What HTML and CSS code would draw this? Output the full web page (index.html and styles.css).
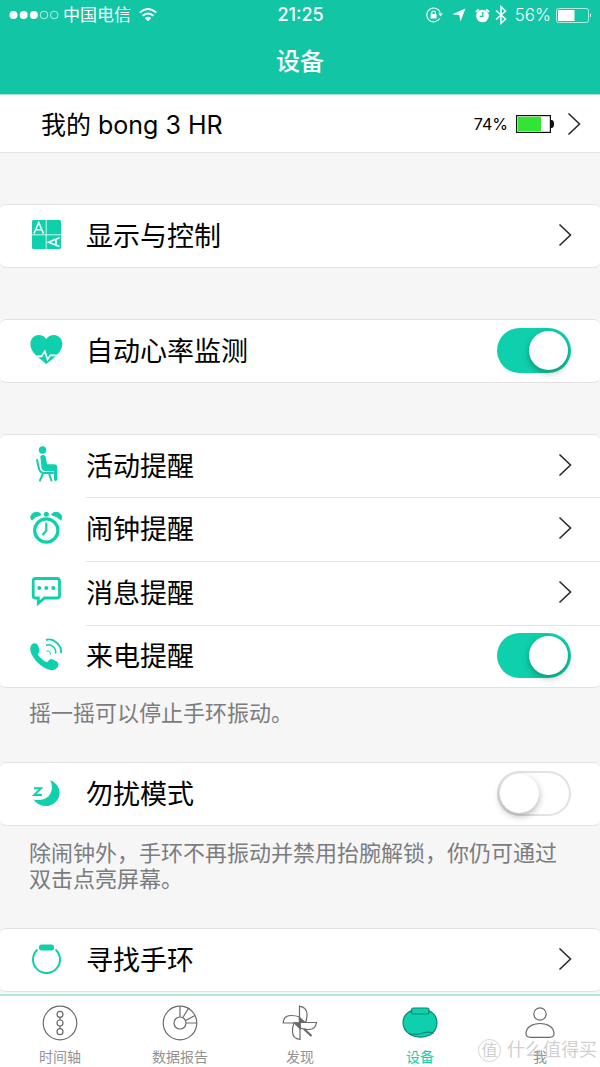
FILE: index.html
```
<!DOCTYPE html>
<html lang="zh-CN">
<head>
    <meta charset="UTF-8">
    <meta name="viewport" content="width=device-width, initial-scale=1.0">
    <title>设备</title>
    <link rel="stylesheet" href="styles.css">
</head>
<body>
    <svg class="defs" width="0" height="0" aria-hidden="true">
        <symbol id="chevron" viewBox="0 0 14 24">
            <path d="M1.500 1.500L12.500 12L1.500 22.500" fill="none" stroke="#2b2b2b" stroke-width="1.600"/>
        </symbol>
    </svg>

    <header class="header">
        <div class="status">
            <div class="status-left">
                <svg class="signal" width="50" height="10" viewBox="0 0 50 10">
                    <g fill="#fff">
                        <circle cx="4.500" cy="5" r="4"/>
                        <circle cx="14.700" cy="5" r="4"/>
                        <circle cx="24.900" cy="5" r="4"/>
                    </g>
                    <g fill="none" stroke="#fff" stroke-width=".7">
                        <circle cx="35" cy="5" r="3.800"/>
                        <circle cx="45.200" cy="5" r="3.800"/>
                    </g>
                </svg>
                <span>中国电信</span>
                <svg class="wifi" width="18" height="14" viewBox="0 0 18 14">
                    <path d="M.8 4.600Q9-2.600 17.200 4.600" fill="none" stroke="#fff" stroke-width="2"/>
                    <path d="M3.600 7.800Q9 3.200 14.400 7.800" fill="none" stroke="#fff" stroke-width="2"/>
                    <path d="M5.800 10Q9 7.400 12.200 10L9 13.200z" fill="#fff"/>
                </svg>
            </div>
            <span class="time">21:25</span>
            <div class="status-right">
                <svg class="lock" width="17" height="16" viewBox="0 0 17 16">
                    <path d="M14.300 6A6.900 6.900 0 1 0 13.600 11.500" fill="none" stroke="#fff" stroke-width="1.100"/>
                    <path d="M12.200 6.600h4.600L14.500 9.600z" fill="#fff"/>
                    <rect x="4.600" y="7" width="6" height="4.600" rx=".5" fill="#fff"/>
                    <path d="M5.800 7.500V5.800a1.800 1.800 0 0 1 3.600 0v1.700" fill="none" stroke="#fff" stroke-width="1.200"/>
                </svg>
                <svg class="arrow" width="14" height="14" viewBox="0 0 14 14">
                    <path d="M13.500.5L8.400 13.500L7.300 7L.3 6.300z" fill="#fff"/>
                </svg>
                <svg class="alarm" width="15" height="15" viewBox="0 0 15 15">
                    <circle cx="7.500" cy="8" r="6.300" fill="#fff"/>
                    <path d="M.8 4L3.700 1.300M14.200 4L11.300 1.300" stroke="#fff" stroke-width="1.700"/>
                    <path d="M7.800 4V8.300H4.600" fill="none" stroke="#12c6a5" stroke-width="1.300"/>
                </svg>
                <svg class="bluetooth" width="12" height="20" viewBox="0 0 12 20">
                    <path d="M1 5.500L10.500 14L6 18.300V1.700L10.500 6L1 14.500" fill="none" stroke="#fff" stroke-width="1.500"/>
                </svg>
                <span>56%</span>
                <svg class="power" width="36" height="15" viewBox="0 0 36 15">
                    <rect x=".5" y=".5" width="32" height="14" rx="2" fill="none" stroke="#fff" stroke-opacity=".65"/>
                    <rect x="2" y="2" width="16.500" height="11" fill="#fff"/>
                    <path d="M34 5.300q2 2.200 0 4.400z" fill="#fff"/>
                </svg>
            </div>
        </div>
        <h1 class="title">设备</h1>
    </header>

    <main class="content">
        <a class="device" href="#">
            <span class="device-name">我的 bong 3 HR</span>
            <span class="device-level">74%</span>
            <svg class="battery" width="38" height="18" viewBox="0 0 38 18">
                <rect x=".6" y=".6" width="33.800" height="16.800" fill="#fff" stroke="#111" stroke-width="1.200"/>
                <rect x="1.800" y="1.800" width="23.200" height="14.400" fill="#33e533"/>
                <path d="M34.500 5h1.500q2 .5 2 4t-2 4h-1.500z" fill="#111"/>
            </svg>
            <svg class="chevron" width="14" height="24"><use href="#chevron"/></svg>
        </a>

        <section class="group">
            <a class="row" href="#">
                <svg class="icon" viewBox="0 0 36 36">
                    <rect x="4" y="3" width="29" height="29" rx="1.500" fill="#0fd0ac"/>
                    <path d="M18.200 3v29M4 17.800h29" stroke="#fff" stroke-width=".8"/>
                    <path d="M6 16.500L10.700 5.500L15.500 16.500M7.500 12.800h6.500" fill="none" stroke="#fff" stroke-width="1.600"/>
                    <path d="M31.500 20.800L20.500 25.200L31.500 29.600M28 22.200v6" fill="none" stroke="#fff" stroke-width="1.600"/>
                </svg>
                <span class="label">显示与控制</span>
                <svg class="chevron" width="14" height="24"><use href="#chevron"/></svg>
            </a>
        </section>

        <section class="group">
            <div class="row">
                <svg class="icon" viewBox="0 0 36 36">
                    <path d="M18.300 7C15 1.800 7 1.500 3.800 6.800C1 12 2.500 18 8 23.500L18.300 32L28.600 23.500C34 18 36 12 32.800 6.800C29.500 1.500 21.500 1.800 18.300 7z" fill="#0fd0ac"/>
                    <path d="M6 24.300H13.500L16.800 19.300L19.500 27.300L22.300 23.300H30" fill="none" stroke="#fff" stroke-width="1.700"/>
                </svg>
                <label class="label" for="heartRate">自动心率监测</label>
                <input class="switch" type="checkbox" id="heartRate" checked>
            </div>
        </section>

        <section class="group">
            <a class="row" href="#">
                <svg class="icon" viewBox="0 0 36 36">
                    <circle cx="14.500" cy="3" r="3.700" fill="#0fd0ac"/>
                    <path d="M12.300 9.500q3.200-3.500 5.500.5l1.200 7.300h7q3.200 0 3.200 3v12.500q-1.600 2.800-3.200 0V24H17.500q-3.500 0-4-3.500z" fill="#0fd0ac"/>
                    <path d="M9 13L11.200 22.500Q12.500 26 16 26H25M15 26.500L12 33.500M21 26.500L23.500 33.500" fill="none" stroke="#0fd0ac" stroke-width="2" stroke-linecap="round"/>
                </svg>
                <span class="label">活动提醒</span>
                <svg class="chevron" width="14" height="24"><use href="#chevron"/></svg>
            </a>
            <a class="row" href="#">
                <svg class="icon" viewBox="0 0 36 36">
                    <circle cx="18.300" cy="20.500" r="11.600" fill="none" stroke="#0fd0ac" stroke-width="3.200"/>
                    <path d="M18.300 13.500v7.200L15 24.500" fill="none" stroke="#0fd0ac" stroke-width="2.200" stroke-linecap="round"/>
                    <circle cx="18.300" cy="4.200" r="2.500" fill="#0fd0ac"/>
                    <path d="M3.800 10C1 6 5 2 9 2.300Q12 2.300 13 4.800Q7.500 6 3.800 10zM32.800 10C35.600 6 31.600 2 27.600 2.300Q24.600 2.300 23.600 4.800Q29 6 32.800 10z" fill="#0fd0ac" stroke="#0fd0ac"/>
                </svg>
                <span class="label">闹钟提醒</span>
                <svg class="chevron" width="14" height="24"><use href="#chevron"/></svg>
            </a>
            <a class="row" href="#">
                <svg class="icon" viewBox="0 0 36 36">
                    <path d="M7.500 4.500H29Q31.500 4.500 31.500 7V21.500Q31.500 24 29 24H16.500L10.300 29.300V24H7.500Q5.200 24 5.200 21.500V7Q5.200 4.500 7.500 4.500z" fill="none" stroke="#0fd0ac" stroke-width="2.800"/>
                    <circle cx="11.300" cy="14" r="2" fill="#0fd0ac"/>
                    <circle cx="18.300" cy="14" r="2" fill="#0fd0ac"/>
                    <circle cx="25.300" cy="14" r="2" fill="#0fd0ac"/>
                </svg>
                <span class="label">消息提醒</span>
                <svg class="chevron" width="14" height="24"><use href="#chevron"/></svg>
            </a>
            <div class="row">
                <svg class="icon" viewBox="0 0 36 36">
                    <path d="M3.500 7.800Q6.500 5 9.500 7.500L11.500 12.500Q12 14.500 10 16.500Q9.500 18 13.500 21.500Q17.500 25.500 19.500 25L21.500 22.500Q23 21.500 25 22.500L29.500 25Q31.500 27 29.500 30.500Q26.500 34.500 20.500 32.500Q11.500 29.500 5.500 20.500Q0 12.500 3.500 7.800z" fill="#0fd0ac"/>
                    <path d="M18 3Q23.500 1 28.500 5.500Q34 10.500 33 16" fill="none" stroke="#0fd0ac" stroke-width="1.900"/>
                    <path d="M18 8.200Q22.500 7 25.500 10Q28.500 13 27.500 16.500" fill="none" stroke="#0fd0ac" stroke-width="1.500"/>
                    <path d="M18.500 14Q22.500 13.500 22.500 17.500" fill="none" stroke="#0fd0ac" stroke-width="1"/>
                </svg>
                <label class="label" for="incomingCall">来电提醒</label>
                <input class="switch" type="checkbox" id="incomingCall" checked>
            </div>
        </section>
        <p class="note">摇一摇可以停止手环振动。</p>

        <section class="group">
            <div class="row">
                <svg class="icon" viewBox="0 0 36 36">
                    <path d="M22.300 5Q31.500 9 31.500 18Q31 28 20.500 31Q10.500 32 5.500 24.500Q14 26.500 20.500 21.500Q26.500 14 22.300 5z" fill="#0fd0ac"/>
                    <path d="M6 13.300H13L6.300 20H14" fill="none" stroke="#0fd0ac" stroke-width="2"/>
                </svg>
                <label class="label" for="quietMode">勿扰模式</label>
                <input class="switch" type="checkbox" id="quietMode">
            </div>
        </section>
        <p class="note note-long">除闹钟外，手环不再振动并禁用抬腕解锁，你仍可通过双击点亮屏幕。</p>

        <section class="group">
            <a class="row" href="#">
                <svg class="icon" viewBox="0 0 36 36">
                    <path d="M9.500 8.500A13.500 13.500 0 1 0 27.500 8.500" fill="none" stroke="#0fd0ac" stroke-width="2"/>
                    <rect x="11" y="3.500" width="15" height="6" rx="2.500" fill="#0fd0ac"/>
                </svg>
                <span class="label">寻找手环</span>
                <svg class="chevron" width="14" height="24"><use href="#chevron"/></svg>
            </a>
        </section>
    </main>

    <nav class="tabbar">
        <a class="tab" href="#">
            <svg class="tab-icon" viewBox="0 0 36 36">
                <circle cx="18" cy="18" r="16.800"/>
                <circle cx="18" cy="9.300" r="3"/>
                <circle cx="18" cy="18" r="3"/>
                <circle cx="18" cy="26.700" r="3"/>
                <path d="M18 12.300V15M18 21V23.700"/>
            </svg>
            <span>时间轴</span>
        </a>
        <a class="tab" href="#">
            <svg class="tab-icon" viewBox="0 0 36 36">
                <circle cx="18" cy="18" r="16.800"/>
                <circle cx="18" cy="18" r="6"/>
                <path d="M18 12V1.200M20.800 12.500L26.500 3.500M23.500 15.500L33 10.500M24 18H34.800"/>
            </svg>
            <span>数据报告</span>
        </a>
        <a class="tab" href="#">
            <svg class="tab-icon" viewBox="0 0 36 36">
                <path d="M17.500 1.200Q25 2.500 25 9.500Q25 14 23.500 17.500H17.500z"/>
                <path d="M1.200 18Q1.500 10.500 9 10.500Q14 10.500 17.500 12V18z"/>
                <path d="M18 34.500Q10.500 33.500 10.500 26.500Q10.500 21 12 18H18z"/>
                <path d="M34.500 17.500Q33.500 24.500 27 24.500Q22 24.500 18 23V17.500z"/>
                <path d="M17.500 12.500L23 17.500H17.500zM12.500 18L18 23.500V18z" fill="#666"/>
                <path d="M22 24L29.500 31" stroke-width="2.200"/>
            </svg>
            <span>发现</span>
        </a>
        <a class="tab active" href="#">
            <svg class="tab-icon" viewBox="0 0 36 36">
                <path d="M9.500 5.500Q1 9.500 1 17.500Q1 25 8 29.500Q17 34.500 28 30Q35 25.500 35 17.500Q35 9.500 26.500 5.500z"/>
                <rect x="9.500" y="3" width="17.500" height="6" rx="2"/>
                <path d="M7 28.500Q15 30.500 21 28Q27 26 31.500 28.500" fill="none"/>
            </svg>
            <span>设备</span>
        </a>
        <a class="tab" href="#">
            <svg class="tab-icon" viewBox="0 0 36 36">
                <circle cx="18" cy="9" r="6.200"/>
                <path d="M18 18.500C26 18.500 32 22.500 32 28.500Q32 32.300 27.500 32.300H8.500Q4 32.300 4 28.500C4 22.500 10 18.500 18 18.500z"/>
            </svg>
            <span>我</span>
        </a>
        <div class="watermark"><span class="watermark-logo">值</span>什么值得买</div>
    </nav>
</body>
</html>
```
FILE: styles.css
```
* {
    box-sizing: border-box;
}

body {
    display: flex;
    flex-direction: column;
    height: 100vh;
    margin: 0;
    background-color: #f6f6f6;
    color: #000;
    font-family: Inter, "Noto Sans CJK SC", sans-serif;
}

a {
    color: inherit;
    text-decoration: none;
}

svg {
    flex: none;
}

.defs {
    position: absolute;
}

/* status bar and title */
.header {
    flex: none;
    background-color: #12c6a5;
    color: #fff;
    border-bottom: 1px solid #a5dfd2;
}

.status {
    display: grid;
    grid-template-columns: 1fr auto 1fr;
    align-items: center;
    height: 30px;
    padding: 0 8px 0 9px;
    font-size: 17px;
    line-height: 30px;
}

.status-left,
.status-right {
    display: flex;
    align-items: center;
}

.status-left {
    gap: 4px;
}

.status-right {
    justify-content: flex-end;
    gap: 5px;
    font-weight: 300;
}

.wifi {
    margin-left: 4px;
}

.lock,
.arrow {
    margin-right: 4px;
}

.bluetooth {
    margin-right: 3px;
}

.time {
    font-size: 18px;
    font-weight: 500;
}

.title {
    margin: 0;
    font-size: 24px;
    font-weight: 500;
    line-height: 64px;
    text-align: center;
}

/* settings list */
.content {
    flex: 1;
    min-height: 0;
    overflow-y: auto;
}

.device {
    display: flex;
    align-items: center;
    height: 58px;
    padding: 0 19px 0 41px;
    background-color: #fff;
    border-bottom: 1px solid #e6e6e6;
}

.device-name {
    flex: 1;
    padding-bottom: 2px;
    font-size: 25px;
}

.device-level {
    margin-right: 8px;
    font-size: 16px;
}

.battery {
    margin-right: 13px;
}

.group {
    margin-top: 51px;
    background-color: #fff;
    border: solid #e2e2e2;
    border-width: 1px 0;
    border-radius: 6px;
}

.row {
    display: flex;
    align-items: center;
    height: 64px;
    padding: 0 28px 2px;
}

.row:first-child,
.row:last-child {
    height: 62px;
}

.row + .row {
    background: linear-gradient(#e4e4e4, #e4e4e4) 86px 0 / 100% 1px no-repeat;
}

.icon {
    width: 36px;
    height: 36px;
    margin-right: 22px;
    overflow: visible;
}

.label {
    flex: 1;
    padding-bottom: 2px;
    font-size: 27px;
}

.switch {
    appearance: none;
    width: 74px;
    height: 45px;
    margin: 0 1px 0 0;
    padding: 3px;
    border-radius: 23px;
    box-shadow: inset 0 0 0 2px #e2e2e2;
    cursor: pointer;
}

.switch::before {
    content: "";
    display: block;
    width: 39px;
    height: 39px;
    border-radius: 50%;
    background-color: #fff;
    box-shadow: 0 3px 7px rgba(0, 0, 0, 0.3);
}

.switch:checked {
    background-color: #0fd0ac;
    box-shadow: none;
}

.switch:checked::before {
    margin-left: auto;
}

.note {
    margin: 0;
    padding: 12px 28px 0 29px;
    color: #7b7c7f;
    font-size: 22px;
    line-height: 26px;
}

.note + .group {
    margin-top: 36px;
}

.note-long {
    padding-top: 14px;
}

/* bottom tabs */
.tabbar {
    position: relative;
    display: grid;
    grid-template-columns: repeat(5, 1fr);
    flex: none;
    height: 73px;
    background-color: #fff;
    border-top: 2px solid #b5e5d8;
}

.tab {
    display: flex;
    flex-direction: column;
    align-items: center;
    padding-top: 9px;
    color: #929292;
    font-size: 14px;
    line-height: 20px;
}

.tab-icon {
    width: 36px;
    height: 36px;
    margin-bottom: 6px;
    fill: none;
    stroke: #6a6a6a;
    stroke-width: 1.2;
}

.active {
    color: #0fd0ac;
}

.active .tab-icon {
    fill: #0fd0ac;
    stroke: #078a78;
}

.watermark {
    position: absolute;
    right: 3px;
    bottom: 4px;
    display: flex;
    align-items: center;
    gap: 6px;
    color: rgba(180, 180, 180, 0.65);
    font-size: 18px;
    line-height: 26px;
    pointer-events: none;
}

.watermark-logo {
    width: 23px;
    height: 23px;
    border: 1px solid #d5d5d5;
    border-radius: 50%;
    font-size: 16px;
    line-height: 20px;
    text-align: center;
}
```
